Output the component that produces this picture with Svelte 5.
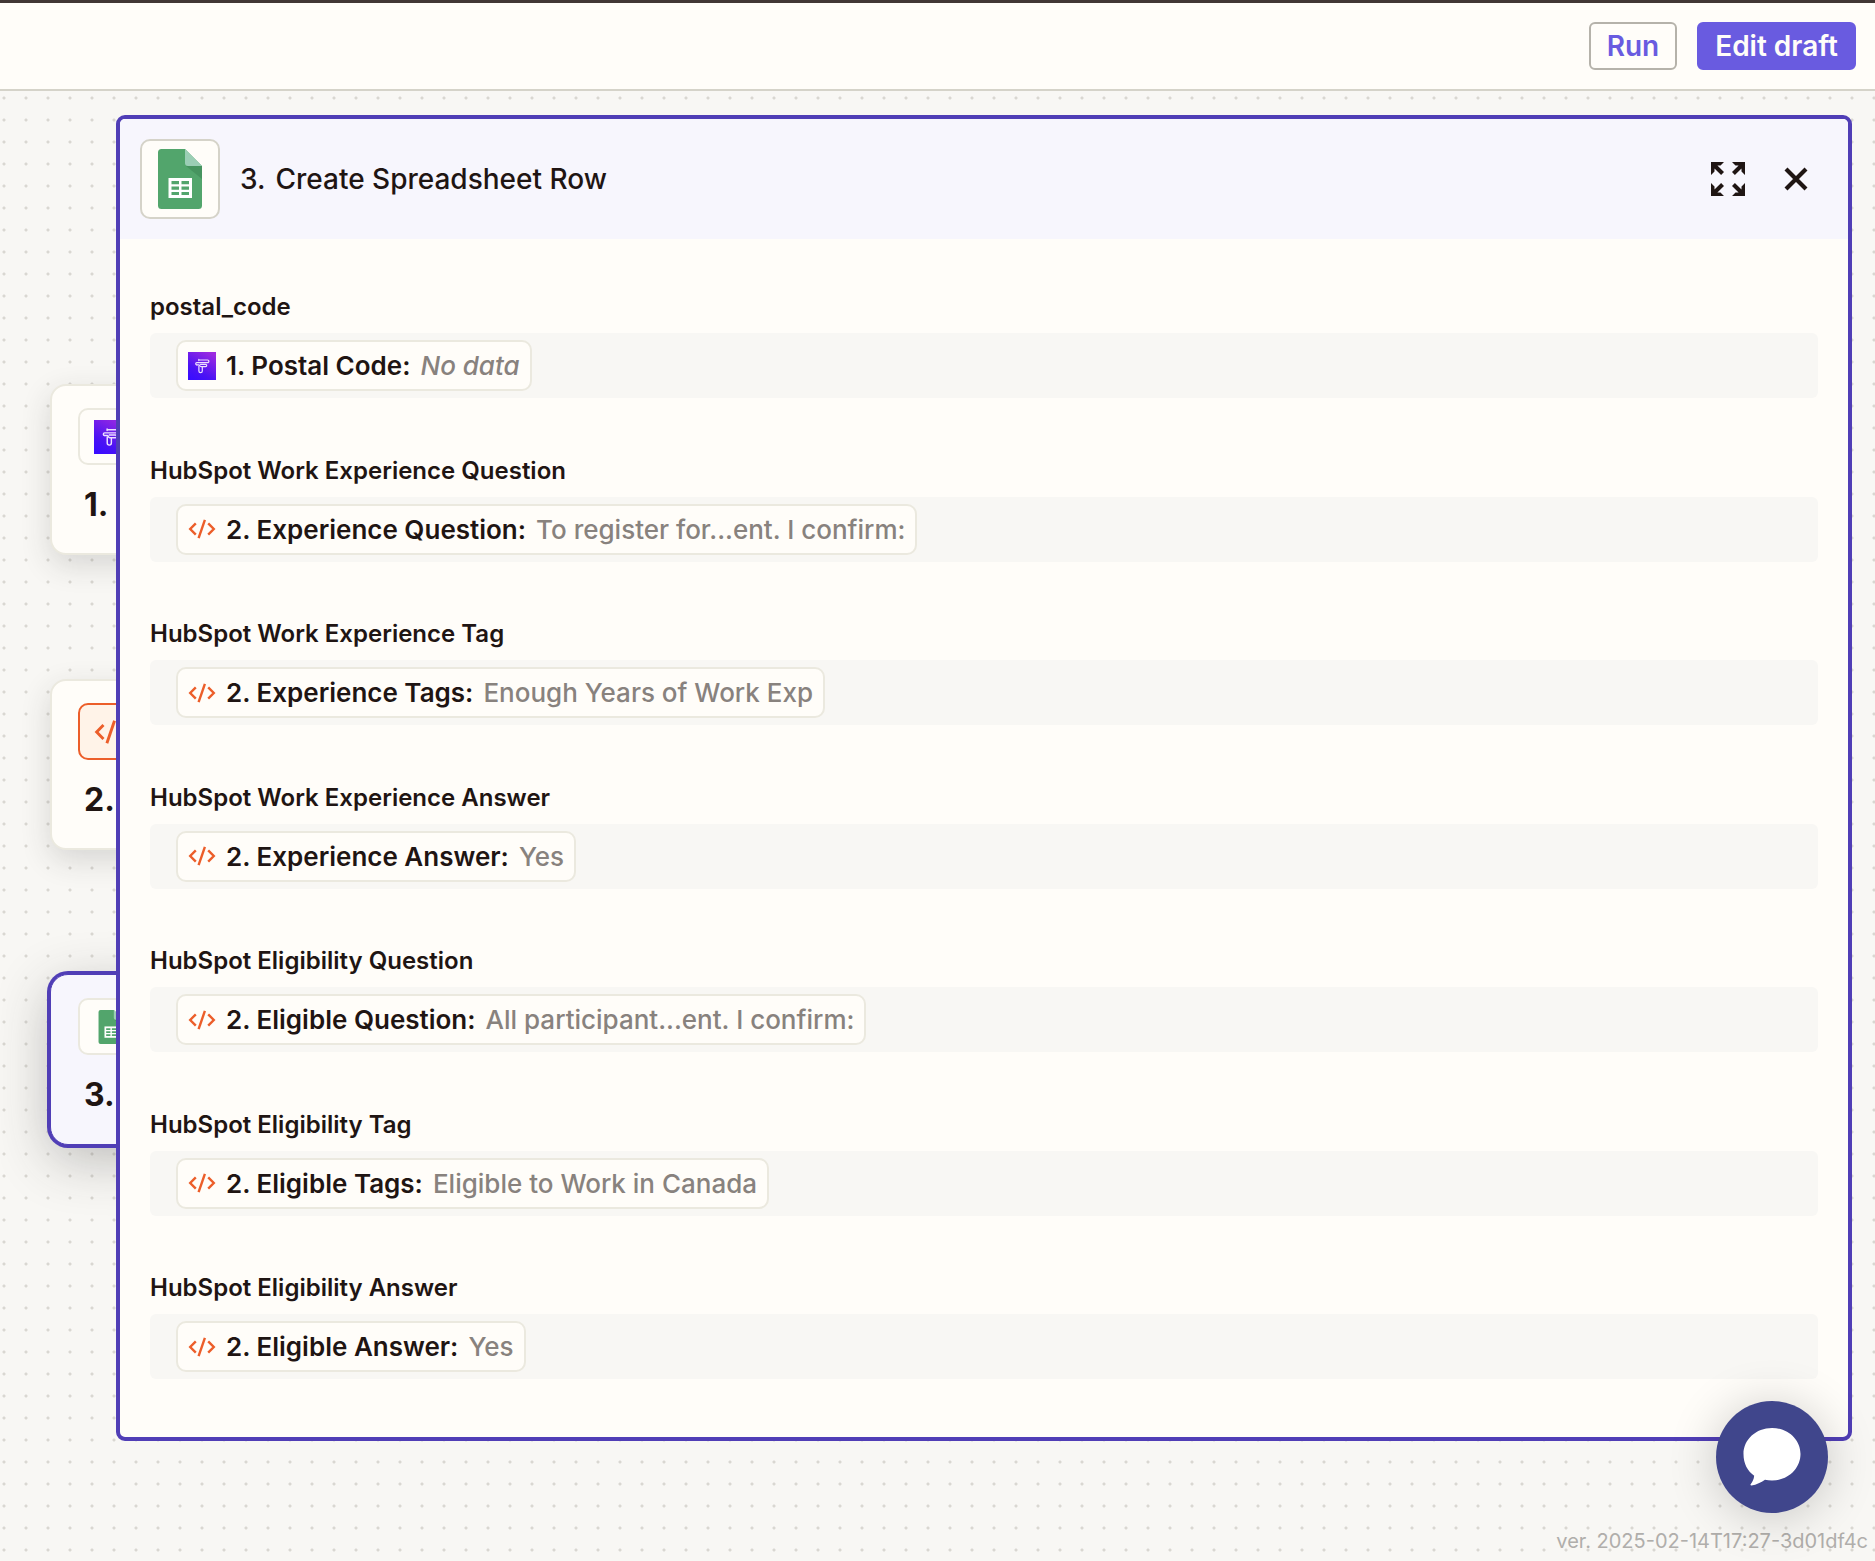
<script>
  const steps = [
    { number: 1, kind: 'form' },
    { number: 2, kind: 'code' },
    { number: 3, kind: 'sheet', selected: true }
  ];

  const fields = [
    { label: 'postal_code', kind: 'form', source: '1. Postal Code:', value: 'No data', empty: true },
    { label: 'HubSpot Work Experience Question', kind: 'code', source: '2. Experience Question:', value: 'To register for...ent. I confirm:' },
    { label: 'HubSpot Work Experience Tag', kind: 'code', source: '2. Experience Tags:', value: 'Enough Years of Work Exp' },
    { label: 'HubSpot Work Experience Answer', kind: 'code', source: '2. Experience Answer:', value: 'Yes' },
    { label: 'HubSpot Eligibility Question', kind: 'code', source: '2. Eligible Question:', value: 'All participant...ent. I confirm:' },
    { label: 'HubSpot Eligibility Tag', kind: 'code', source: '2. Eligible Tags:', value: 'Eligible to Work in Canada' },
    { label: 'HubSpot Eligibility Answer', kind: 'code', source: '2. Eligible Answer:', value: 'Yes' }
  ];
</script>

{#snippet appIcon(kind)}
  {#if kind === 'form'}
    <svg class="icon" viewBox="0 0 28 28" aria-hidden="true">
      <defs>
        <linearGradient id="form-fill" x1="0.2" y1="1" x2="0.8" y2="0">
          <stop offset="0" stop-color="#3a0cff" />
          <stop offset="0.3" stop-color="#4a12f4" />
          <stop offset="1" stop-color="#9d2be0" />
        </linearGradient>
      </defs>
      <rect width="28" height="28" fill="url(#form-fill)" />
      <g fill="none" stroke="#eee0ff" stroke-width="1.2" stroke-linejoin="round" stroke-linecap="round">
        <path d="M10.800 7.300V8.600M10.800 8H19.600a1.200 1.200 0 0 1 0 2.600H8.800a1.100 1.100 0 0 0 0 2.200" />
        <path d="M8.800 12.800H11c.6 0 .8 1.800 2 1.800h4.600a1.100 1.100 0 0 0 0-2.200H12.600" />
        <path d="M10.900 14v5a1.700 1.700 0 0 0 3.400 0v-4" />
      </g>
    </svg>
  {:else if kind === 'code'}
    <svg class="icon" viewBox="0 0 28 28" aria-hidden="true">
      <g fill="none" stroke="#ec5e2a" stroke-width="2.4">
        <path d="M7.800 8.300 2.200 14l5.600 5.700" />
        <path d="M20.200 8.300 25.800 14l-5.600 5.700" />
        <path d="M16.900 4.800 10.600 23.200" />
      </g>
    </svg>
  {:else}
    <svg class="icon" viewBox="0 0 60 60" aria-hidden="true">
      <path fill="#52a56c" d="M11 0h24l17 17v39.500a3.500 3.500 0 0 1-3.500 3.500h-37A3.500 3.500 0 0 1 8 56.500v-53A3.500 3.500 0 0 1 11.500 0z" />
      <path fill="#46945f" d="M36 17h16v13z" />
      <path fill="#9bceb5" d="M35 0l17 17H38a3 3 0 0 1-3-3z" />
      <path fill="#fff" d="M18.500 29h23.500v20H18.500z" />
      <path fill="#52a56c" d="M21.500 32H29v3.300h-7.500zM31.500 32H39v3.300h-7.500zM21.500 37.500H29v3.300h-7.500zM31.500 37.500H39v3.300h-7.500zM21.500 43H29v3h-7.500zM31.500 43H39v3h-7.500z" />
    </svg>
  {/if}
{/snippet}

<div class="app">
  <header class="topbar">
    <button type="button" class="btn outline">Run</button>
    <button type="button" class="btn solid">Edit draft</button>
  </header>

  <main class="canvas">
    <div class="steps">
      {#each steps as step}
        <article class="step" class:selected={step.selected}>
          <div class="badge {step.kind}">{@render appIcon(step.kind)}</div>
          <div class="number">{step.number}.</div>
        </article>
      {/each}
    </div>

    <section class="panel" aria-labelledby="panel-title">
      <header class="panel-head">
        <div class="app-tile">{@render appIcon('sheet')}</div>
        <h1 id="panel-title"><span>3.</span><span>Create Spreadsheet Row</span></h1>
        <button type="button" class="tool" aria-label="Expand">
          <svg viewBox="0 0 34 34" aria-hidden="true">
            <g fill="#1f1513">
              <path id="corner" d="M0 0h13l-3.500 3.500H6.400L13 10.100 10.100 13 3.500 6.400v3.100L0 13z" />
              <use href="#corner" transform="matrix(-1 0 0 1 34 0)" />
              <use href="#corner" transform="matrix(1 0 0 -1 0 34)" />
              <use href="#corner" transform="matrix(-1 0 0 -1 34 34)" />
            </g>
          </svg>
        </button>
        <button type="button" class="tool" aria-label="Close">
          <svg viewBox="0 0 34 34" aria-hidden="true">
            <path d="M7 7l20 20M27 7L7 27" stroke="#1f1513" stroke-width="4.200" />
          </svg>
        </button>
      </header>

      <dl class="fields">
        {#each fields as field}
          <div class="field">
            <dt>{field.label}</dt>
            <dd>
              <span class="pill">
                {@render appIcon(field.kind)}
                <span class="source">{field.source}</span>
                <span class="value" class:empty={field.empty}>{field.value}</span>
              </span>
            </dd>
          </div>
        {/each}
      </dl>
    </section>

    <p class="version">ver. 2025-02-14T17:27-3d01df4c</p>
    <button type="button" class="chat" aria-label="Open chat">
      <svg viewBox="0 0 58 58" aria-hidden="true">
        <path fill="#fff" d="M29 0c16 0 28.500 11.500 28.500 26S45 52.500 29 52.500c-2.500 0-4.800-.2-7-.7-4 2.600-8.500 5-13.500 5.700-1 .1-1.300-.7-.7-1.400 1.800-2.200 3-5 3.400-8.300C4.500 43 .5 35.500 .5 26 .5 11.500 13 0 29 0z" />
      </svg>
    </button>
  </main>
</div>

<style>
  :global(body) {
    margin: 0;
  }

  .app {
    display: flex;
    flex-direction: column;
    box-sizing: border-box;
    min-height: 100vh;
    border-top: 3px solid #413735;
    font-family: Inter, 'Liberation Sans', sans-serif;
    color: #1f1513;
  }

  button {
    font: inherit;
    cursor: pointer;
  }

  .topbar {
    display: flex;
    justify-content: flex-end;
    gap: 20px;
    padding: 19px 19px;
    background: #fffdf9;
    border-bottom: 2px solid #d5d3c9;
  }

  .btn {
    box-sizing: border-box;
    height: 48px;
    padding: 0 16px;
    border: 2px solid #b5b2aa;
    border-radius: 6px;
    font-size: 28px;
    font-weight: 600;
    line-height: 44px;
  }

  .outline {
    background: #fffdf9;
    color: #695be0;
  }

  .solid {
    background: #695be0;
    border-color: #695be0;
    color: #fffdf9;
  }

  .canvas {
    position: relative;
    flex: 1;
    display: grid;
    overflow: hidden;
    background: radial-gradient(circle at 4px 7px, #d9d7d1 1px, transparent 2px) 0 0 / 22px 22px #f8f7f4;
  }

  .steps,
  .panel {
    grid-area: 1 / 1;
  }

  .steps {
    display: flex;
    flex-direction: column;
    align-items: flex-start;
    gap: 124px;
    padding: 293px 0 0 50px;
  }

  .step {
    box-sizing: border-box;
    width: 560px;
    height: 171px;
    padding: 22px 26px;
    background: #fffdf9;
    border: 2px solid #ebe9df;
    border-radius: 16px;
    box-shadow: 0 10px 30px rgba(45, 46, 46, 0.16);
  }

  .selected {
    padding: 23px 27px;
    background: #f7f6fd;
    border: 1px solid #503eb6;
    border-radius: 18px;
    box-shadow: 0 0 0 3px #503eb6, 0 14px 54px rgba(45, 46, 46, 0.3);
  }

  .badge {
    box-sizing: border-box;
    display: flex;
    align-items: center;
    width: 180px;
    height: 57px;
    padding: 0 14px;
    background: #fffdf9;
    border: 2px solid #ebe9df;
    border-radius: 10px;
  }

  .badge.code {
    background: #fff3e8;
    border-color: #ec5e2a;
  }

  .badge .icon {
    width: 34px;
    height: 34px;
  }

  .number {
    padding: 20px 6px 0;
    font-size: 32px;
    font-weight: 700;
    line-height: 40px;
  }

  .panel {
    position: relative;
    display: flex;
    flex-direction: column;
    margin: 24px 23px 120px 116px;
    background: #fffdf9;
    border: 4px solid #503eb6;
    border-radius: 9px;
  }

  .panel-head {
    display: flex;
    align-items: center;
    gap: 20px;
    padding: 20px 28px 20px 20px;
    background: #f7f6fd;
    border-radius: 5px 5px 0 0;
  }

  .app-tile {
    display: flex;
    padding: 8px;
    background: #fffdf9;
    border: 2px solid #d5d3c9;
    border-radius: 10px;
  }

  .app-tile .icon {
    width: 60px;
    height: 60px;
  }

  h1 {
    flex: 1;
    display: flex;
    gap: 10px;
    margin: 0;
    font-size: 28px;
    font-weight: 500;
    line-height: 40px;
  }

  .tool {
    display: flex;
    padding: 7px;
    background: none;
    border: 0;
  }

  .tool svg {
    width: 34px;
    height: 34px;
  }

  .fields {
    flex: 1;
    display: flex;
    flex-direction: column;
    justify-content: space-between;
    gap: 24px;
    margin: 0;
    padding: 50px 30px 58px;
  }

  dt {
    padding-bottom: 8px;
    font-size: 24px;
    font-weight: 600;
    line-height: 36px;
  }

  dd {
    display: flex;
    margin: 0;
    padding: 7px 26px;
    background: #f8f7f4;
    border-radius: 6px;
  }

  .pill {
    box-sizing: border-box;
    display: flex;
    align-items: center;
    height: 51px;
    padding: 0 10px;
    background: #fffdf9;
    border: 2px solid #ebe9df;
    border-radius: 10px;
    font-size: 26px;
    white-space: nowrap;
  }

  .pill .icon {
    width: 28px;
    height: 28px;
  }

  .source {
    margin: 0 10px;
    font-weight: 600;
  }

  .value {
    font-weight: 500;
    color: #88827e;
  }

  .empty {
    font-style: italic;
  }

  .version {
    position: absolute;
    right: 7px;
    bottom: 6px;
    margin: 0;
    font-size: 20px;
    line-height: 28px;
    color: #b0aeab;
  }

  .chat {
    position: absolute;
    right: 47px;
    bottom: 48px;
    display: flex;
    align-items: center;
    justify-content: center;
    width: 112px;
    height: 112px;
    padding: 0;
    background: #40468c;
    border: 0;
    border-radius: 50%;
    box-shadow: 0 4px 50px rgba(0, 0, 0, 0.2);
  }

  .chat svg {
    width: 58px;
    height: 58px;
  }
</style>
